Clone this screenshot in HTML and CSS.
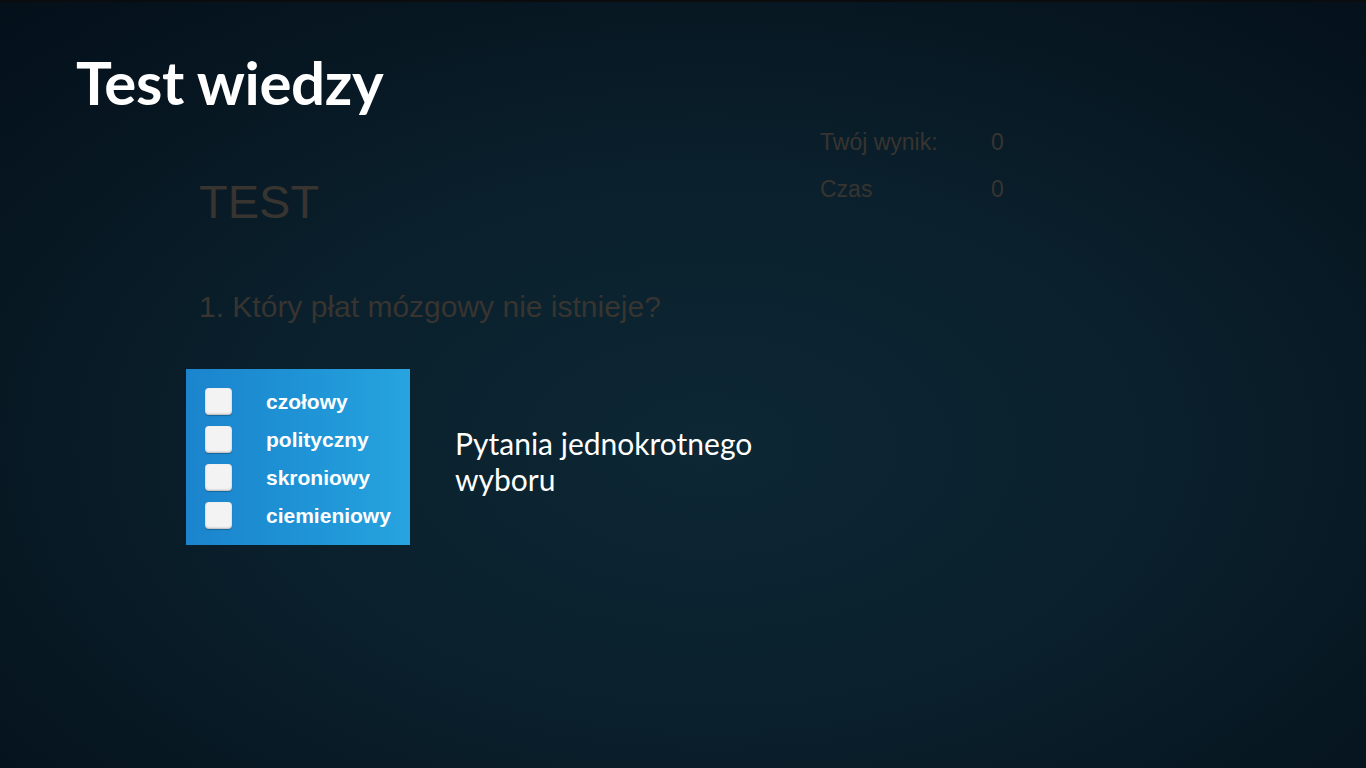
FILE: index.html
```html
<!DOCTYPE html>
<html lang="pl">
<head>
<meta charset="utf-8">
<title>Test wiedzy</title>
<link rel="stylesheet" href="styles.css">
</head>
<body>
<div class="slide">
  <h1 class="title">Test wiedzy</h1>
  <div class="ghost">
    <div class="ghost-left">
      <div class="ghost-test">TEST</div>
      <div class="ghost-q">1. Który płat mózgowy nie istnieje?</div>
    </div>
    <div class="ghost-score">
      <div class="score-row"><span class="score-label">Twój wynik:</span><span>0</span></div>
      <div class="score-row"><span class="score-label">Czas</span><span>0</span></div>
    </div>
  </div>
  <div class="content">
    <div class="quiz">
      <div class="opt"><span class="box"></span><span class="lbl">czołowy</span></div>
      <div class="opt"><span class="box"></span><span class="lbl">polityczny</span></div>
      <div class="opt"><span class="box"></span><span class="lbl">skroniowy</span></div>
      <div class="opt"><span class="box"></span><span class="lbl">ciemieniowy</span></div>
    </div>
    <p class="caption">Pytania jednokrotnego<br>wyboru</p>
  </div>
</div>
</body>
</html>
```

FILE: styles.css
```css
html, body {
  margin: 0;
  padding: 0;
  width: 1366px;
  height: 768px;
  overflow: hidden;
}
body {
  background: #06131c;
}
.slide {
  box-sizing: border-box;
  width: 1366px;
  height: 768px;
  border-top: 2px solid #0a0c0d;
  background: radial-gradient(ellipse 75% 80% at 52% 58%, #0d2734 0%, #0a202c 45%, #061520 80%, #04101a 100%);
  padding: 48px 0 0 76px;
  font-family: "Liberation Sans", Arial, sans-serif;
}
.title {
  margin: 0;
  font-family: Lato, sans-serif;
  font-weight: 700;
  font-size: 60px;
  line-height: 64px;
  color: #ffffff;
  letter-spacing: -0.4px;
}
.ghost {
  display: flex;
  margin: 14px 0 0 123px;
  color: #383430;
}
.ghost-left {
  width: 621px;
}
.ghost-test {
  margin-top: 46px;
  font-size: 47px;
  line-height: 56px;
}
.ghost-q {
  margin-top: 61px;
  font-size: 30px;
  line-height: 32px;
}
.ghost-score {
  display: flex;
  flex-direction: column;
  gap: 21px;
  margin-top: 1px;
  font-size: 23px;
  line-height: 26px;
}
.score-row {
  display: flex;
}
.score-label {
  width: 171px;
}
.content {
  display: flex;
  align-items: center;
  margin: 46px 0 0 110px;
}
.quiz {
  width: 224px;
  height: 176px;
  box-sizing: border-box;
  padding: 19px 0 0 19px;
  background: linear-gradient(90deg, #1b84cd 0%, #1f94d6 55%, #27a4df 100%);
  display: flex;
  flex-direction: column;
  gap: 11px;
}
.opt {
  display: flex;
  align-items: center;
  height: 27px;
}
.box {
  width: 27px;
  height: 27px;
  box-sizing: border-box;
  border-radius: 4px;
  background: #f3f3f3;
  box-shadow: inset 0 -1px 2px rgba(0,0,0,0.25), 0 1px 1px rgba(0,0,0,0.25);
}
.lbl {
  margin-left: 34px;
  font-weight: 700;
  font-size: 21px;
  color: #ffffff;
}
.caption {
  margin: 0 0 0 45px;
  padding-top: 8px;
  font-family: Lato, sans-serif;
  font-size: 30px;
  line-height: 36px;
  color: #ffffff;
}
```
